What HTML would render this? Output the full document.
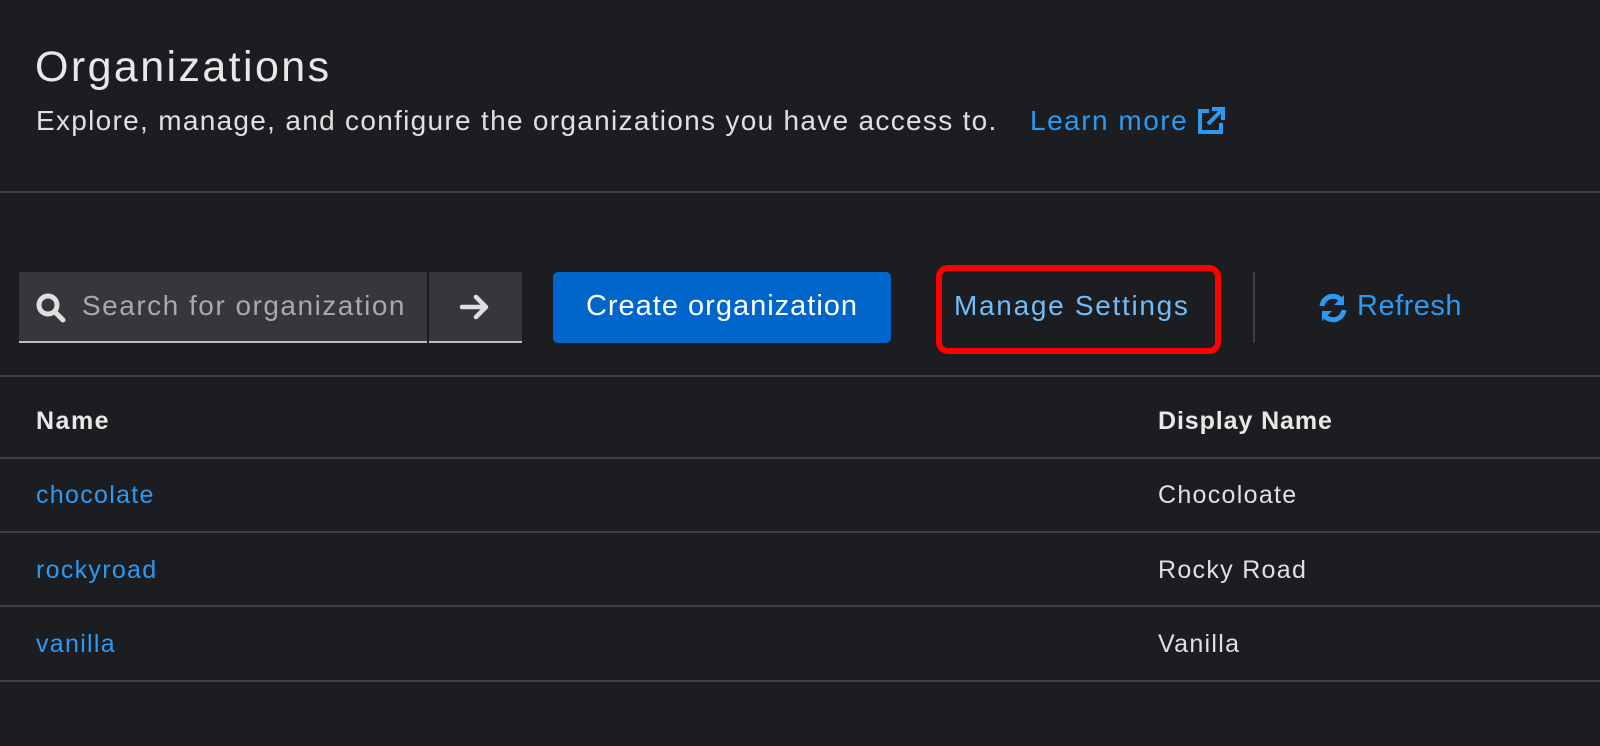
<!DOCTYPE html>
<html><head><style>
body{margin:0;width:1600px;height:746px;background:#1b1d21;font-family:"Liberation Sans",sans-serif;color:#e0e0e0;position:relative;overflow:hidden}
.a{position:absolute;white-space:nowrap}
.hl{position:absolute;left:0;width:1600px;height:2px;background:#3c3f42}
.link{color:#2b9af3}
.t{font-size:25px;letter-spacing:1.3px}
</style></head><body>
<div class="a" style="left:35px;top:43px;font-size:43px;letter-spacing:2.4px;color:#e8e8e8">Organizations</div>
<div class="a" style="left:36px;top:105px;font-size:28px;letter-spacing:1.3px;color:#e0e0e0">Explore, manage, and configure the organizations you have access to.</div>
<div class="a link" style="left:1030px;top:105px;font-size:28px;letter-spacing:1.5px">Learn more</div>
<svg class="a" style="left:1196px;top:106px" width="30" height="30" viewBox="0 0 30 30"><path d="M13 5H4v21h21v-9" fill="none" stroke="#2b9af3" stroke-width="4"/><path d="M12 18L26 4M16 3h11v11" fill="none" stroke="#2b9af3" stroke-width="4"/></svg>
<div class="hl" style="top:191px"></div>
<div class="a" style="left:19px;top:272px;width:408px;height:69px;background:#36373b;border-bottom:2px solid #b8bbbe"></div>
<svg class="a" style="left:35px;top:292px" width="34" height="34" viewBox="0 0 34 34"><circle cx="13" cy="13" r="9" fill="none" stroke="#e0e0e0" stroke-width="5"/><path d="M20 20l8 8" stroke="#e0e0e0" stroke-width="5" stroke-linecap="round"/></svg>
<div class="a" style="left:82px;top:290px;font-size:28px;letter-spacing:1.5px;color:#a8a9ab">Search for organization</div>
<div class="a" style="left:429px;top:272px;width:93px;height:69px;background:#36373b;border-bottom:2px solid #b8bbbe"></div>
<svg class="a" style="left:458px;top:292px" width="34" height="30" viewBox="0 0 34 30"><path d="M4 15h24M18 5l10 10-10 10" fill="none" stroke="#e0e0e0" stroke-width="4.5" stroke-linecap="round" stroke-linejoin="round"/></svg>
<div class="a" style="left:553px;top:272px;width:338px;height:71px;background:#0066cc;border-radius:5px"></div>
<div class="a" style="left:553px;top:290px;width:338px;text-align:center;font-size:29px;letter-spacing:1px;color:#fff">Create organization</div>
<div class="a" style="left:936px;top:265px;width:273px;height:77px;border:6px solid #f00;border-radius:12px"></div>
<div class="a" style="left:954px;top:290px;font-size:28px;letter-spacing:1.7px;color:#73bcf7">Manage Settings</div>
<div class="a" style="left:1253px;top:272px;width:2px;height:71px;background:#3c3f42"></div>
<svg class="a" style="left:1317px;top:293px" width="32" height="30" viewBox="0 0 32 30"><path d="M5 13A11 11 0 0 1 25 8" fill="none" stroke="#2b9af3" stroke-width="5"/><path d="M27 2v10H17z" fill="#2b9af3"/><path d="M27 17A11 11 0 0 1 7 22" fill="none" stroke="#2b9af3" stroke-width="5"/><path d="M5 28V18h10z" fill="#2b9af3"/></svg>
<div class="a link" style="left:1357px;top:290px;font-size:29px;letter-spacing:0.5px">Refresh</div>
<div class="hl" style="top:375px"></div>
<div class="a t" style="left:36px;top:407px;font-weight:bold;letter-spacing:1.5px;color:#e8e8e8">Name</div>
<div class="a t" style="left:1158px;top:407px;font-weight:bold;letter-spacing:0.9px;color:#e8e8e8">Display Name</div>
<div class="hl" style="top:457px"></div>
<div class="a link t" style="left:36px;top:481px">chocolate</div>
<div class="a t" style="left:1158px;top:481px">Chocoloate</div>
<div class="hl" style="top:531px"></div>
<div class="a link t" style="left:36px;top:556px">rockyroad</div>
<div class="a t" style="left:1158px;top:556px">Rocky Road</div>
<div class="hl" style="top:605px"></div>
<div class="a link t" style="left:36px;top:630px">vanilla</div>
<div class="a t" style="left:1158px;top:630px">Vanilla</div>
<div class="hl" style="top:680px"></div>
</body></html>
